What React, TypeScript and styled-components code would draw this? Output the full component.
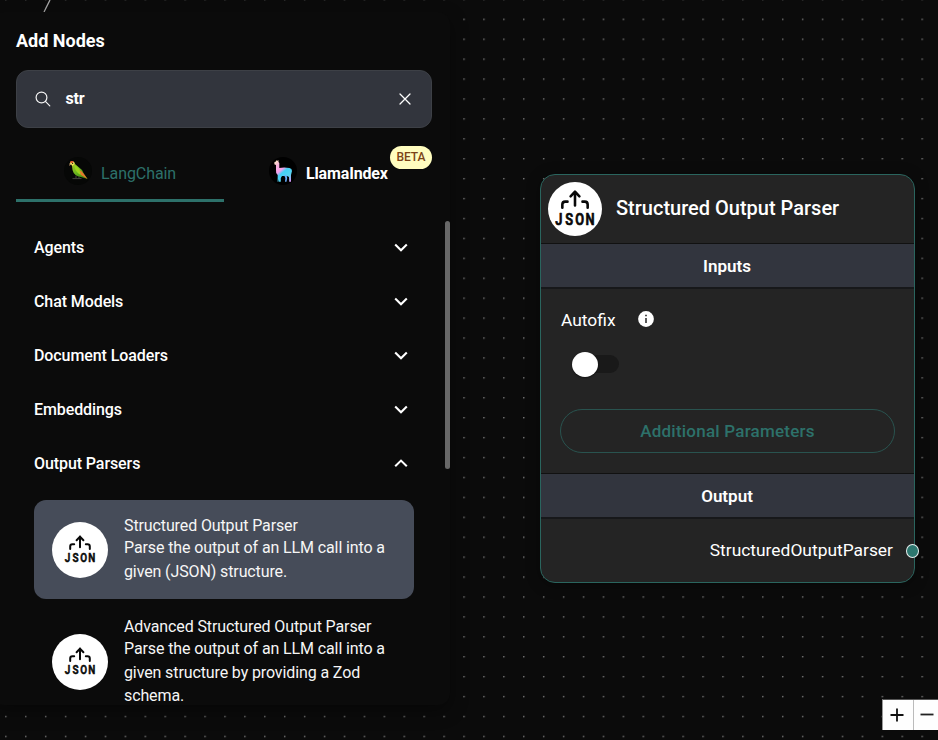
import React from 'react';
import styled, { createGlobalStyle } from 'styled-components';

const Global = createGlobalStyle`
  * { box-sizing: border-box; }
  html, body { margin: 0; background: #0b0b0b; overflow: hidden; }
  body { font-family: Roboto, "Liberation Sans", sans-serif; color: #fff; }
  button { font: inherit; color: inherit; background: none; border: 0; padding: 0; }
`;

const Canvas = styled.main`
  position: relative;
  width: 938px;
  height: 740px;
  overflow: hidden;
  background: #0b0b0b;
`;

const Dots = styled.svg`
  position: absolute;
  inset: 0;
  width: 100%;
  height: 100%;
`;

const Slash = styled.svg`
  position: absolute;
  left: 40px;
  top: 0;
`;

const Panel = styled.aside`
  position: absolute;
  left: -8px;
  top: 12px;
  width: 458px;
  height: 693px;
  padding: 17px 0 0 24px;
  border-radius: 12px;
  background: #0b0b0b;
  box-shadow: 0 6px 18px rgba(0, 0, 0, 0.4);
  overflow: hidden;
`;

const Title = styled.h4`
  margin: 0;
  height: 24px;
  font-size: 18px;
  line-height: 24px;
  font-weight: 700;
`;

const Search = styled.div`
  display: flex;
  align-items: center;
  width: 416px;
  height: 58px;
  margin-top: 17px;
  padding: 0 20px 0 18px;
  border: 1px solid #3d4046;
  border-radius: 12px;
  background: #32353d;
`;

const Query = styled.span`
  flex: 1;
  margin: -2px 0 0 14.5px;
  font-size: 16px;
  font-weight: 700;
  letter-spacing: -0.2px;
`;

const Tabs = styled.div`
  display: flex;
  width: 416px;
  height: 74px;
`;

const Tab = styled.button<{ $active?: boolean }>`
  display: flex;
  position: relative;
  width: 208px;
  height: 74px;
  padding: ${p => (p.$active ? '29px 0 0 48px' : '29px 0 0 45px')};
  font-size: 16px;
  font-weight: ${p => (p.$active ? 400 : 700)};
  color: ${p => (p.$active ? '#2d716a' : '#fff')};
  border-bottom: 3px solid ${p => (p.$active ? '#2d716a' : 'transparent')};
`;

const TabLabel = styled.span<{ $spacing: number }>`
  margin: 7px 0 0 9px;
  line-height: 20px;
  letter-spacing: ${p => p.$spacing}px;
`;

const Beta = styled.span`
  position: absolute;
  right: 0;
  top: 18px;
  width: 42px;
  height: 23px;
  border-radius: 12px;
  background: #fffdbf;
  color: #7b4316;
  font-size: 12px;
  font-weight: 500;
  line-height: 22px;
  text-align: center;
`;

const ListArea = styled.div`
  display: flex;
  height: 503px;
  margin-top: 18px;
`;

const List = styled.div`
  width: 429px;
  padding-left: 18px;
`;

const Scrollbar = styled.div`
  width: 5px;
  height: 248px;
  margin-top: 1px;
  border-radius: 3px;
  background: #686868;
`;

const Category = styled.div`
  display: flex;
  align-items: center;
  justify-content: space-between;
  width: 373.5px;
  height: 54px;
  font-size: 16px;
  font-weight: 500;
  letter-spacing: -0.09px;
`;

const Item = styled.div<{ $selected?: boolean }>`
  display: flex;
  align-items: center;
  width: 380px;
  height: ${p => (p.$selected ? 99 : 126)}px;
  margin-top: ${p => (p.$selected ? 10 : 0)}px;
  padding-left: 18px;
  border-radius: 12px;
  background: ${p => (p.$selected ? '#464c59' : 'transparent')};
`;

const ItemText = styled.div`
  width: 272px;
  margin-left: 16px;
  font-size: 16px;
  line-height: 23.6px;
  letter-spacing: -0.115px;
  color: #f6f6f6;
`;

const ItemName = styled.div`
  line-height: 21px;
`;

const Node = styled.section`
  position: absolute;
  left: 540px;
  top: 174px;
  width: 375px;
  height: 409px;
  border: 1.3px solid #2a655e;
  border-radius: 15px;
  background: #242424;
  box-shadow: 0 2px 14px rgba(0, 0, 0, 0.35);
`;

const NodeHead = styled.header`
  display: flex;
  align-items: center;
  height: 68px;
  padding-left: 7px;
  gap: 14px;
`;

const NodeTitle = styled.span`
  margin-top: -2px;
  font-size: 20px;
  font-weight: 500;
`;

const Section = styled.div`
  display: flex;
  align-items: center;
  justify-content: center;
  height: 46px;
  padding: 1px 1px 0 0;
  border-top: 1px solid #111;
  border-bottom: 2px solid #17181a;
  background: #32353e;
  font-size: 17px;
  font-weight: 600;
`;

const Inputs = styled.div`
  display: flex;
  flex-direction: column;
  height: 184px;
  padding: 19px 19px 0 19px;
`;

const Field = styled.div`
  display: flex;
  align-items: center;
  height: 24px;
  padding-left: 1px;
  gap: 22px;
  font-size: 17.4px;

  svg { margin-top: -3px; }
`;

const Switch = styled.div`
  display: flex;
  align-items: center;
  width: 47px;
  height: 26px;
  margin: 19px 0 0 12px;
`;

const Knob = styled.span`
  width: 26px;
  height: 25px;
  border-radius: 50%;
  background: #fff;
  box-shadow: 0 1px 2px rgba(0, 0, 0, 0.5);
  z-index: 1;
`;

const Track = styled.span`
  width: 34px;
  height: 18px;
  margin-left: -13px;
  border-radius: 9px;
  background: #191919;
`;

const Params = styled.button`
  && {
    flex-shrink: 0;
    height: 44px;
    margin-top: 32px;
    border: 1px solid #29534f;
    border-radius: 23px;
    color: #2d716a;
    font-size: 17px;
    font-weight: 500;
    letter-spacing: 0.22px;
  }
`;

const Output = styled.div`
  display: flex;
  align-items: center;
  justify-content: flex-end;
  height: 61px;
  padding-right: 21px;
  font-size: 17.4px;
`;

const Handle = styled.span`
  position: absolute;
  right: -5px;
  top: 369px;
  width: 13px;
  height: 14px;
  border: 1px solid #e6eeee;
  border-radius: 50%;
  background: #2d776f;
`;

const Controls = styled.div`
  position: absolute;
  left: 882px;
  top: 699px;
  display: flex;
  border-left: 1px solid #999;
  border-top: 1px solid #555;
`;

const Control = styled.button`
  display: flex;
  align-items: center;
  justify-content: center;
  width: 30px;
  height: 30px;
  padding-right: 2px;
  background: #fefefe;

  & + & {
    padding-right: 4px;
    border-left: 1px solid #bbb;
  }
`;

const IconSvg = styled.svg`
  flex-shrink: 0;
`;

const JsonIcon = ({ size, zoom = 1 }: { size: number; zoom?: number }) => (
  <IconSvg width={size} height={size} viewBox="0 0 56 56">
    <circle cx="28" cy="28" r="28" fill="#fff" />
    <g transform={`translate(28 28) scale(${zoom}) translate(-28 -28)`}>
      <path
        d="M28 25.2V14.6M24.6 18.2L28 14.6L31.4 18.2M18.2 27V24.6Q18.2 22.3 20.4 22.3H22.2M33.8 22.3H35.6Q37.8 22.3 37.8 24.6V27"
        fill="none" stroke="#080808" strokeWidth="2" strokeLinecap="round" strokeLinejoin="round"
      />
      <g
        transform="translate(0 40.3) scale(.8 1)" textAnchor="middle"
        fontFamily="Roboto, sans-serif" fontWeight="600" fontSize="12.4"
        fill="#080808" stroke="#080808" strokeWidth="0.55" strokeLinejoin="round"
      >
        <text x="19.3 29.4 39.6 49.6">JSON</text>
      </g>
    </g>
  </IconSvg>
);

const Parrot = () => (
  <svg width="28" height="28" viewBox="0 0 28 28">
    <defs>
      <linearGradient id="wing" x1="0" y1="0" x2="1" y2="1">
        <stop offset="0" stopColor="#b8c92b" />
        <stop offset=".5" stopColor="#68b51e" />
        <stop offset="1" stopColor="#34790f" />
      </linearGradient>
    </defs>
    <circle cx="14" cy="14" r="14" fill="#060706" />
    <path d="M8.5 21.6H17.5M12 18.5V21M15 19.5V21.5" stroke="#4b4943" strokeWidth=".9" />
    <path d="M6.5 6C7 3.7 10 4 11 7L18 13L20 17L23.5 22L17 20Q10 19 8.5 13L8 9Z" fill="url(#wing)" />
    <path d="M10 8Q14 9 17 15L16.5 18Q11 15 10 8" fill="#9bd51d" />
    <path d="M15.5 13Q19 15 23.5 22L17 18Z" fill="#e8782c" />
    <path d="M5.8 7Q6 4 8 4Q11 4.5 10.5 7L8.5 9L7 7Z" fill="#f2df5a" />
    <path d="M5.8 5.2Q8 3 9.8 5L7.8 6Z" fill="#df4a29" />
    <path d="M5.8 6L5.3 9L7.4 7Z" fill="#d5a978" />
    <circle cx="8.6" cy="6.4" r=".6" fill="#26200f" />
  </svg>
);

const Llama = () => (
  <svg width="28" height="28" viewBox="0 0 28 28">
    <defs>
      <linearGradient id="fleece" x1="5" y1="4" x2="22" y2="24" gradientUnits="userSpaceOnUse">
        <stop offset="0" stopColor="#fff3c0" />
        <stop offset=".22" stopColor="#f9b2dc" />
        <stop offset=".43" stopColor="#f5a1ec" />
        <stop offset=".55" stopColor="#43d0f6" />
        <stop offset=".78" stopColor="#55d3ef" />
        <stop offset="1" stopColor="#d793f7" />
      </linearGradient>
    </defs>
    <circle cx="14" cy="14" r="14" fill="#000" />
    <path d="M7 3L8 4L9.4 3L9.5 5L10.3 6V11Q15 9.8 20.5 11Q23 11.3 23 14L22 18V24.7H20.2L20 20L18 19L17.7 19L13 19L11.8 21V24.7H9.8L10 22L9.2 24.7H8.6L8.7 18Q6.5 16 7 13V8L5.3 7.2L5.5 5L7 4.5Z" fill="url(#fleece)" />
    <path d="M17.5 18L18.2 21L17.5 24.7H16L16.4 21L15 18Z" fill="#65aefa" />
  </svg>
);

const SearchIcon = () => (
  <svg width="16" height="16" viewBox="0 0 16 16" fill="none" stroke="#f4f4f4" strokeWidth="1.2" strokeLinecap="round">
    <circle cx="6.5" cy="6.5" r="5.4" />
    <path d="M10.4 10.4L14.8 14.8" />
  </svg>
);

const CloseIcon = () => (
  <svg width="12" height="12" viewBox="0 0 12 12" stroke="#fff" strokeWidth="1.25" strokeLinecap="round">
    <path d="M1 1L11 11M11 1L1 11" />
  </svg>
);

const Chevron = ({ up }: { up?: boolean }) => (
  <svg width="14" height="14" viewBox="0 0 14 14" fill="none" stroke="#fff" strokeWidth="2.1">
    <path d={up ? 'M1.2 10.2L7 4.6L12.8 10.2' : 'M1.2 4.6L7 10.3L12.8 4.6'} />
  </svg>
);

const InfoIcon = () => (
  <svg width="16" height="16" viewBox="0 0 16 16">
    <circle cx="8" cy="8" r="7.9" fill="#fff" />
    <path d="M7.2 4.6H8.8M8 7V12" stroke="#252525" strokeWidth="1.5" fill="none" />
  </svg>
);

const categories = ['Agents', 'Chat Models', 'Document Loaders', 'Embeddings', 'Output Parsers'];

export default function App() {
  return (
    <Canvas>
      <Global />
      <Dots>
        <defs>
          <pattern id="grid" x="5.1" y="18.6" width="19.92" height="19.92" patternUnits="userSpaceOnUse">
            <circle cx=".8" cy=".8" r=".8" fill="#8c8c8c" />
          </pattern>
        </defs>
        <rect width="938" height="739" fill="url(#grid)" />
      </Dots>
      <Slash width="12" height="12"><path d="M10 0L4 12" stroke="#aaa" strokeWidth="1.3" /></Slash>
      <Panel>
        <Title>Add Nodes</Title>
        <Search><SearchIcon /><Query>str</Query><CloseIcon /></Search>
        <Tabs>
          <Tab $active><Parrot /><TabLabel $spacing={-0.08}>LangChain</TabLabel></Tab>
          <Tab><Llama /><TabLabel $spacing={-0.15}>LlamaIndex</TabLabel><Beta>BETA</Beta></Tab>
        </Tabs>
        <ListArea>
          <List>
            {categories.map((name, i) => <Category key={name}>{name}<Chevron up={i === 4} /></Category>)}
            <Item $selected>
              <JsonIcon size={56} />
              <ItemText><ItemName>Structured Output Parser</ItemName>Parse the output of an LLM call into a given (JSON) structure.</ItemText>
            </Item>
            <Item>
              <JsonIcon size={56} />
              <ItemText><ItemName>Advanced Structured Output Parser</ItemName>Parse the output of an LLM call into a given structure by providing a Zod schema.</ItemText>
            </Item>
          </List>
          <Scrollbar />
        </ListArea>
      </Panel>
      <Node>
        <NodeHead><JsonIcon size={54} zoom={1.34} /><NodeTitle>Structured Output Parser</NodeTitle></NodeHead>
        <Section>Inputs</Section>
        <Inputs>
          <Field>Autofix<InfoIcon /></Field>
          <Switch><Knob /><Track /></Switch>
          <Params>Additional Parameters</Params>
        </Inputs>
        <Section>Output</Section>
        <Output>StructuredOutputParser</Output>
        <Handle />
      </Node>
      <Controls>
        <Control><svg width="14" height="14" stroke="#111" strokeWidth="1.8"><path d="M.5 7H13.5M7 .5V13.5" /></svg></Control>
        <Control><svg width="14" height="14" stroke="#222" strokeWidth="1.8"><path d="M.5 6.5H13.5" /></svg></Control>
      </Controls>
    </Canvas>
  );
}
